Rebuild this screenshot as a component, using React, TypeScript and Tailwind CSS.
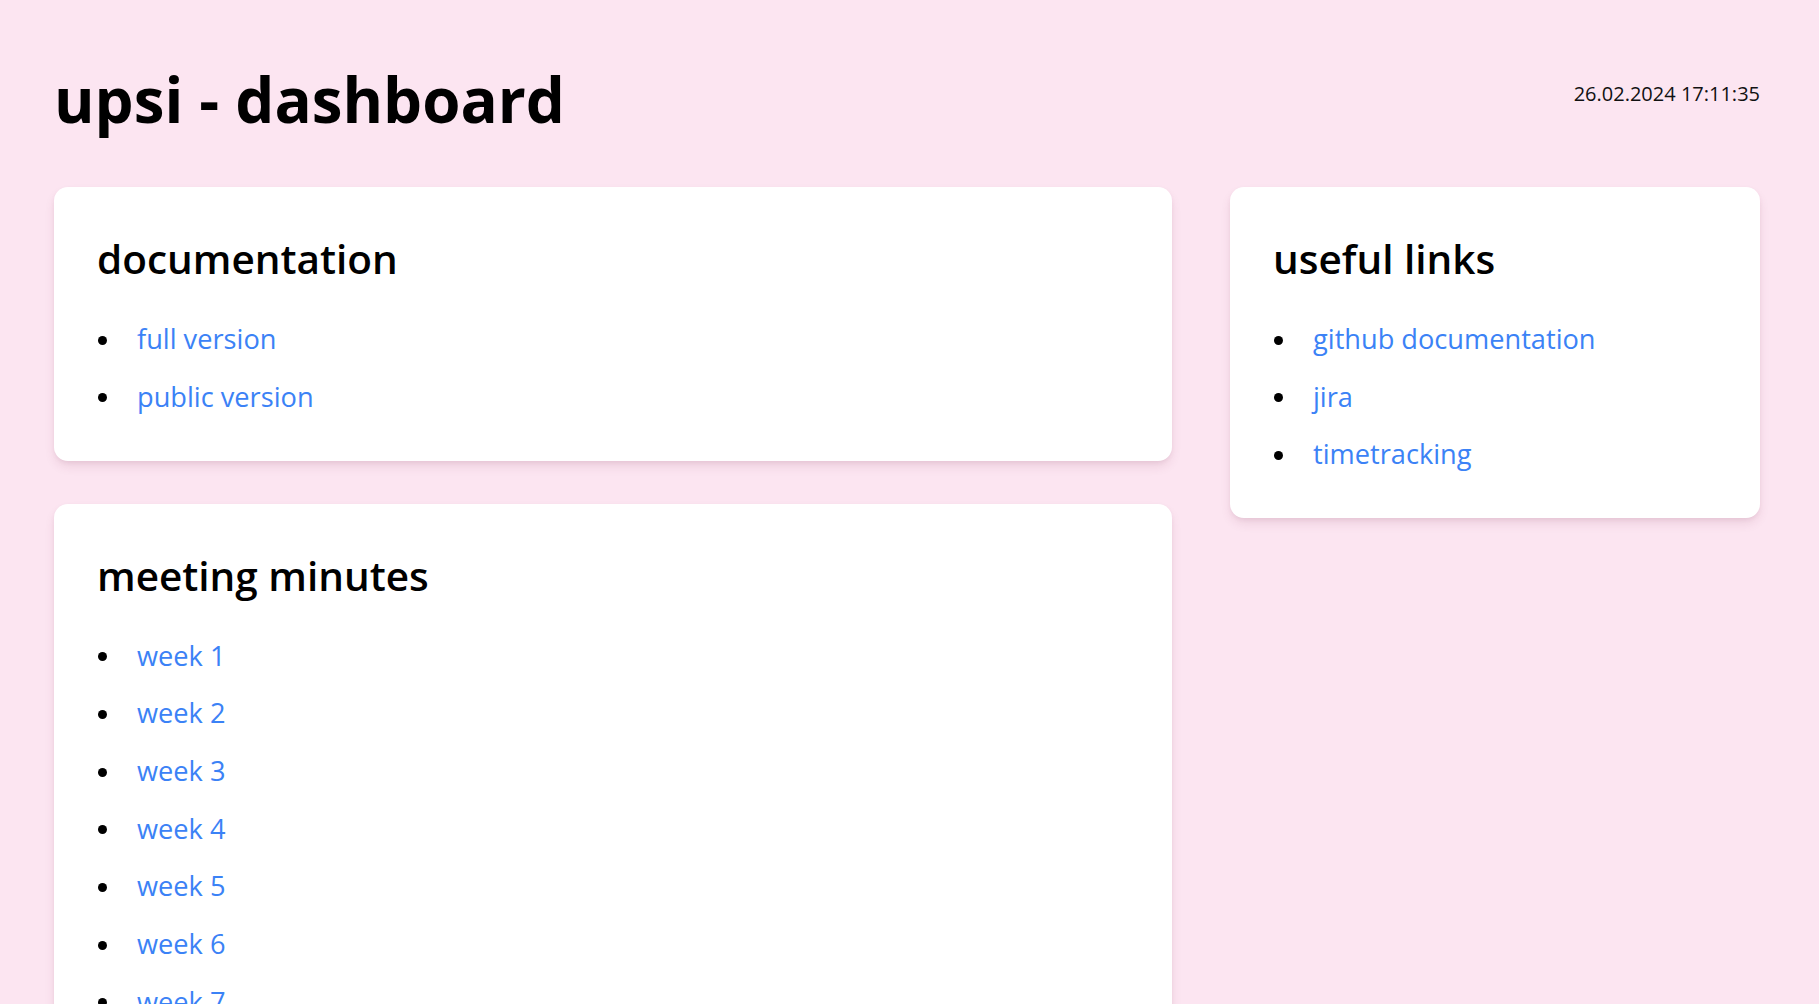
import React from "react";

const docs = ["full version", "public version"];
const links = ["github documentation", "jira", "timetracking"];
const weeks = Array.from({ length: 12 }, (_, i) => `week ${i + 1}`);

function Card({ title, items }: { title: string; items: string[] }) {
  return (
    <div className="bg-white rounded-[14px] shadow-[0_6px_12px_-2px_rgba(120,40,80,0.14),0_2px_5px_-1px_rgba(120,40,80,0.08)] pt-[48px] pb-[44px] pl-[43px] pr-[43px]">
      <h2 className="text-[40.5px] leading-[48px] font-semibold text-black">{title}</h2>
      <ul className="mt-[36px] flex flex-col gap-[17.7px]">
        {items.map((it) => (
          <li key={it} className="flex items-center h-[40px]">
            <span className="w-[9px] h-[9px] rounded-full bg-black ml-[1px] mr-[30px] mt-[2px] shrink-0" />
            <a href="#" className="text-[27.2px] leading-[40px] text-[#3b82f6]">
              {it}
            </a>
          </li>
        ))}
      </ul>
    </div>
  );
}

export default function App() {
  return (
    <div
      className="min-h-screen bg-[#fce5f1] pl-[54px] pr-[59px] pt-[68px] pb-[60px]"
      style={{ fontFamily: '"Open Sans", "Noto Sans", sans-serif' }}
    >
      <header className="flex justify-between items-start">
        <h1 className="text-[61.8px] leading-[62px] font-bold text-black">upsi - dashboard</h1>
        <div className="text-[20px] leading-[24px] text-[#111] mt-[14px]">26.02.2024 17:11:35</div>
      </header>
      <main className="grid grid-cols-3 gap-x-[58px] mt-[57px] items-start">
        <div className="col-span-2 flex flex-col gap-[43px]">
          <Card title="documentation" items={docs} />
          <Card title="meeting minutes" items={weeks} />
        </div>
        <Card title="useful links" items={links} />
      </main>
    </div>
  );
}
